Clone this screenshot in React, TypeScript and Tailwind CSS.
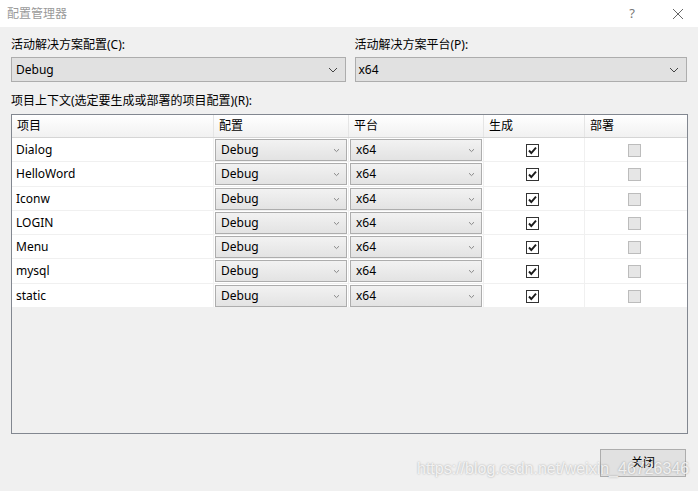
import React from 'react';

const projects = ['Dialog', 'HelloWord', 'Iconw', 'LOGIN', 'Menu', 'mysql', 'static'];
// row heights in the original grid are not all equal
const rowHeights = ['h-[24px]', 'h-[25px]', 'h-[24px]', 'h-[24px]', 'h-[24px]', 'h-[25px]', 'h-[24px]'];

const cjk = { fontFamily: '"Noto Sans", "Noto Sans CJK SC", sans-serif' };

const Chevron: React.FC<{ small?: boolean }> = ({ small }) =>
    small ? (
        <svg width="7" height="5" viewBox="0 0 7 5" className="shrink-0">
            <path d="M1 1.2 L3.5 3.6 L6 1.2" fill="none" stroke="#888" strokeWidth="1" />
        </svg>
    ) : (
        <svg width="10" height="6" viewBox="0 0 10 6" className="shrink-0">
            <path d="M1 1 L5 5 L9 1" fill="none" stroke="#444" strokeWidth="1" />
        </svg>
    );

const CellCombo: React.FC<{ value: string }> = ({ value }) => (
    <div className="m-px flex h-[22px] items-center justify-between border border-[#adadad] bg-gradient-to-b from-[#f2f2f2] to-[#e3e3e3] pl-[5px] pr-[6px] text-[12px] text-black">
        <span>{value}</span>
        <Chevron small />
    </div>
);

const CheckBox: React.FC<{ checked?: boolean }> = ({ checked }) =>
    checked ? (
        <div className="flex h-[13px] w-[13px] items-center justify-center border border-[#333] bg-white">
            <svg width="11" height="11" viewBox="0 0 11 11">
                <path d="M2 5.5 L4.3 8 L9 2.6" fill="none" stroke="#1a1a1a" strokeWidth="1.9" />
            </svg>
        </div>
    ) : (
        <div className="h-[13px] w-[13px] border border-[#bcbcbc] bg-[#e6e6e6]" />
    );

const App: React.FC = () => {
    return (
        <div className="relative h-[491px] w-[698px] overflow-hidden bg-[#f0f0f0] text-black" style={cjk}>
            {/* Title bar */}
            <div className="flex h-[27px] items-center bg-white pl-[7px] pr-[14px]">
                <span className="flex-1 text-[12px] text-[#9a9a9a]">配置管理器</span>
                <span className="mr-[37px] text-[13px] text-[#777]">?</span>
                <svg width="12" height="12" viewBox="0 0 12 12">
                    <path d="M1 1 L11 11 M11 1 L1 11" stroke="#666" strokeWidth="1" />
                </svg>
            </div>

            <div className="px-[11px] pt-[10px]">
                {/* Active config / platform */}
                <div className="flex gap-[9px]">
                    <div className="w-[335px]">
                        <div className="h-[16px] text-[12px] leading-[16px]">活动解决方案配置(C):</div>
                        <div className="mt-[4px] flex h-[25px] items-center justify-between border border-[#adadad] bg-[#e1e1e1] pl-[4px] pr-[7px] text-[12px]">
                            <span>Debug</span>
                            <Chevron />
                        </div>
                    </div>
                    <div className="w-[333px]">
                        <div className="h-[16px] text-[12px] leading-[16px]">活动解决方案平台(P):</div>
                        <div className="mt-[4px] flex h-[25px] items-center justify-between border border-[#adadad] bg-[#e1e1e1] pl-[3px] pr-[7px] text-[12px]">
                            <span>x64</span>
                            <Chevron />
                        </div>
                    </div>
                </div>

                <div className="mt-[11px] h-[16px] text-[12px] leading-[16px]">项目上下文(选定要生成或部署的项目配置)(R):</div>

                {/* Project grid */}
                <div className="mt-[5px] h-[320px] w-[677px] border border-[#828790] bg-[#f0f0f0]">
                    <div className="grid h-[23px] grid-cols-[202px_135px_135px_101px_102px] border-b border-[#d5d5d5] bg-gradient-to-b from-white to-[#f1f1f1] text-[12px]">
                        {['项目', '配置', '平台', '生成', '部署'].map((h, i) => (
                            <div key={h} className={`flex items-center pl-[5px] ${i < 4 ? 'border-r border-[#e5e5e5]' : ''}`}>
                                {h}
                            </div>
                        ))}
                    </div>
                    {projects.map((p, i) => (
                        <div key={p} className={`grid ${rowHeights[i]} grid-cols-[202px_135px_135px_101px_102px] items-center border-b border-[#f0f0f0] bg-white text-[12px]`}>
                            <div className="flex h-full items-center border-r border-[#f0f0f0] pl-[4px]">{p}</div>
                            <div className="flex h-full items-center border-r border-[#f0f0f0]">
                                <div className="w-full">
                                    <CellCombo value="Debug" />
                                </div>
                            </div>
                            <div className="flex h-full items-center border-r border-[#f0f0f0]">
                                <div className="w-full">
                                    <CellCombo value="x64" />
                                </div>
                            </div>
                            <div className="flex h-full items-center justify-center border-r border-[#f0f0f0] pr-[3px]">
                                <CheckBox checked />
                            </div>
                            <div className="flex h-full items-center justify-center pr-[3px]">
                                <CheckBox />
                            </div>
                        </div>
                    ))}
                </div>

                <div className="mt-[15px] flex justify-end pr-px">
                    <button className="h-[28px] w-[86px] border border-[#adadad] bg-[#e1e1e1] text-[12px]">关闭</button>
                </div>
            </div>

            {/* Watermark */}
            <div
                className="absolute left-[417px] top-[457px] whitespace-nowrap text-[16px] text-white/80 [text-shadow:0_0_2px_rgba(0,0,0,0.35)]"
                style={{ fontFamily: '"Liberation Sans", Arial, sans-serif' }}
            >
                https://blog.csdn.net/weixin_46726346
            </div>
        </div>
    );
};

export default App;
